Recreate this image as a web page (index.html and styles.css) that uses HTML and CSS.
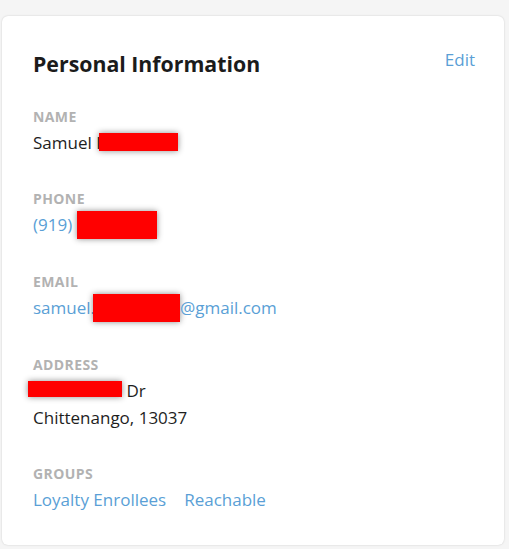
FILE: index.html
```html
<!DOCTYPE html>
<html>
<head>
<meta charset="utf-8">
<link rel="stylesheet" href="styles.css">
</head>
<body>
<div class="card">
  <div class="card-head">
    <h2 class="title">Personal Information</h2>
    <a class="edit">Edit</a>
  </div>
  <div class="field">
    <div class="label">NAME</div>
    <div class="value">Samuel I<span class="redact r-name"></span></div>
  </div>
  <div class="field">
    <div class="label">PHONE</div>
    <div class="value link">(919) <span class="redact r-phone"></span></div>
  </div>
  <div class="field">
    <div class="label">EMAIL</div>
    <div class="value link">samuel.<span class="redact r-email"></span>@gmail.com</div>
  </div>
  <div class="field">
    <div class="label">ADDRESS</div>
    <div class="value"><span class="redact r-addr"></span> Dr</div>
    <div class="value">Chittenango, 13037</div>
  </div>
  <div class="field">
    <div class="label">GROUPS</div>
    <div class="value link groups"><span>Loyalty Enrollees</span><span>Reachable</span></div>
  </div>
</div>
</body>
</html>
```
FILE: styles.css
```css
html, body {
  margin: 0;
  background: #f5f5f5;
}
body {
  padding: 16px 5px 4px 2px;
  font-family: "Open Sans", sans-serif;
}
.card {
  background: #fff;
  border-radius: 6px;
  box-shadow: 0 0 2px rgba(0,0,0,0.18);
  height: 529px;
  box-sizing: border-box;
  padding: 34px 29px 0 31px;
}
.card-head {
  display: flex;
  justify-content: space-between;
  align-items: flex-start;
}
.title {
  margin: 0;
  font-size: 21.3px;
  font-weight: 700;
  color: #1b1b1b;
  line-height: 28px;
}
.edit {
  color: #5a9fd6;
  font-size: 17px;
  line-height: 20px;
  margin-top: 0;
}
.field {
  margin-top: 35px;
}
.card-head + .field {
  margin-top: 31px;
}
.label {
  font-size: 14px;
  font-weight: 700;
  letter-spacing: 0.4px;
  color: #b2b2b2;
  line-height: 16px;
  margin-bottom: 4px;
}
.value {
  font-size: 17px;
  line-height: 27px;
  color: #1e1e1e;
}
.link {
  color: #5a9fd6;
}
.groups {
  display: flex;
  gap: 18px;
}
.redact {
  display: inline-block;
  background: #ff0000;
  box-shadow: 0 0 6px rgba(0,0,0,0.45);
  vertical-align: top;
}
.r-name {
  width: 79px;
  height: 18px;
  margin-left: -2px;
  margin-top: 4px;
}
.r-phone {
  width: 80px;
  height: 28px;
  margin-top: 0;
}
.r-email {
  width: 87px;
  height: 28px;
  margin-left: -2px;
}
.r-addr {
  width: 94px;
  height: 16px;
  margin-left: -5px;
  margin-top: 4px;
}
```
